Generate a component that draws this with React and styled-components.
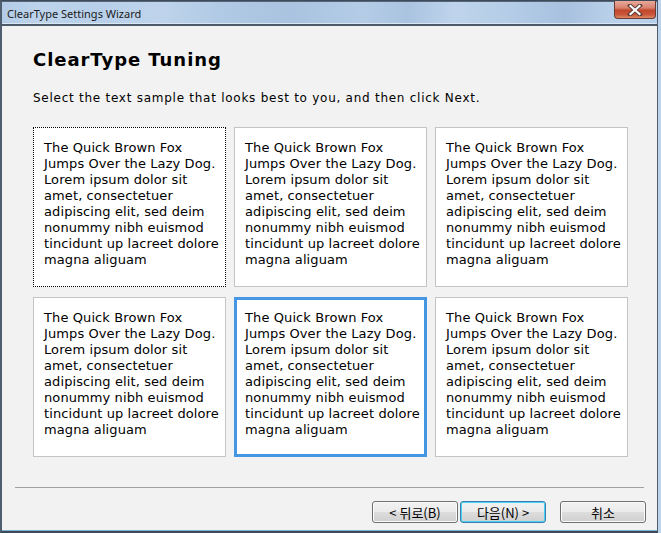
import React from "react";
import styled, { createGlobalStyle } from "styled-components";

const Global = createGlobalStyle`
  html, body { margin: 0; padding: 0; background: #bcd3ea; }
  * { box-sizing: border-box; }
`;

const Window = styled.div`
  width: 658px;
  height: 533px;
  display: flex;
  flex-direction: column;
  border-top: 1px solid #3d4a58;
  border-left: 2px solid #4f5e6e;
  border-right: 1px solid #4f5e6e;
  border-bottom: 2px solid #3e4b58;
  background: #f2f2f2;
`;

const TitleBar = styled.div`
  height: 25px;
  flex: none;
  display: flex;
  align-items: flex-start;
  padding-left: 5px;
  border-top: 1px solid #56657a;
  border-bottom: 2px solid #4b5968;
  box-shadow: inset 0 -1px 0 #d9e6f3;
  background: linear-gradient(90deg, #b3cbe6 0%, #bed4ec 6%, #b7cfe9 14%, #bfd4ec 24%, #b0c9e4 34%, #a9c3e0 44%, #b4cce6 55%, #aac3e0 62%, #bfd4ec 69%, #b5cde7 77%, #a8c1df 86%, #bcd2eb 94%, #b8cfe9 100%);
`;

const Title = styled.div`
  font-family: "Noto Sans", sans-serif;
  font-size: 11px;
  line-height: 24px;
  color: #1b1b1b;
  margin-top: 0px;
`;

const CloseButton = styled.div`
  margin-left: auto;
  margin-right: 1px;
  margin-top: -1px;
  width: 42px;
  height: 18px;
  border: 1px solid #6b3a32;
  border-top: none;
  border-radius: 0 0 4px 4px;
  background: linear-gradient(180deg, #e9a99a 0%, #d9826e 40%, #c2472d 55%, #c9563a 80%, #dc8a66 100%);
  display: flex;
  align-items: center;
  justify-content: center;
`;

const Body = styled.div`
  flex: 1;
  display: flex;
  flex-direction: column;
  border-bottom: 1px solid #7ab0d4;
`;

const Main = styled.div`
  padding: 23px 0 0 31px;
  display: flex;
  flex-direction: column;
`;

const Heading = styled.h1`
  margin: 0;
  font-family: "DejaVu Sans", Verdana, sans-serif;
  font-weight: bold;
  font-size: 18px;
  line-height: 22px;
  letter-spacing: 0.95px;
  color: #000;
`;

const Subtitle = styled.p`
  margin: 19px 0 0 0;
  font-family: "DejaVu Sans", Verdana, sans-serif;
  font-size: 12px;
  line-height: 16px;
  letter-spacing: 0.74px;
  color: #000;
`;

const Grid = styled.div`
  margin-top: 21px;
  display: grid;
  grid-template-columns: repeat(3, 193px);
  grid-auto-rows: 160px;
  column-gap: 8px;
  row-gap: 10px;
`;

const Sample = styled.div`
  background: #fff;
  border: ${(p) =>
    p.$selected ? "3px solid #4597e3" : p.$focused ? "1px dotted #000" : "1px solid #c4c4c4"};
  padding: ${(p) => (p.$selected ? "10px 0 0 8px" : "12px 0 0 10px")};
  font-family: "DejaVu Sans", Verdana, sans-serif;
  font-size: 13px;
  line-height: 16px;
  letter-spacing: 0.1px;
  color: #000;
  white-space: pre;
  overflow: hidden;
`;

const Footer = styled.div`
  margin-top: auto;
  padding: 0 13px 7px 13px;
  display: flex;
  flex-direction: column;
`;

const Separator = styled.div`
  height: 1px;
  background: #a0a0a0;
  margin-bottom: 13px;
`;

const ButtonRow = styled.div`
  display: flex;
  justify-content: flex-end;
  margin-right: -2px;
`;

const Button = styled.div`
  width: 86px;
  height: 22px;
  margin-left: ${(p) => p.$gap || 0}px;
  border: 1px solid ${(p) => (p.$default ? "#3c7fb1" : "#707070")};
  border-radius: 3px;
  background: linear-gradient(180deg, #f2f2f2 0%, #ebebeb 48%, #dddddd 52%, #cfcfcf 100%);
  box-shadow: inset 0 0 0 1px ${(p) => (p.$default ? "#48d2f5" : "#fbfbfb")};
  display: flex;
  align-items: center;
  justify-content: center;
  font-family: "Noto Sans CJK KR", "Noto Sans", sans-serif;
  font-size: 13px;
  color: #000;
`;

const text = `The Quick Brown Fox
Jumps Over the Lazy Dog.
Lorem ipsum dolor sit
amet, consectetuer
adipiscing elit, sed deim
nonummy nibh euismod
tincidunt up lacreet dolore
magna aliguam`;

export default function App() {
  return (
    <>
      <Global />
      <Window>
        <TitleBar>
          <Title>ClearType Settings Wizard</Title>
          <CloseButton>
            <svg width="16" height="12" viewBox="0 0 16 12">
              <path d="M3 1.5 L13 10.5 M13 1.5 L3 10.5" stroke="#5a3a34" strokeWidth="4" strokeLinecap="square" />
              <path d="M3.5 2 L12.5 10 M12.5 2 L3.5 10" stroke="#fff" strokeWidth="2.2" strokeLinecap="square" />
            </svg>
          </CloseButton>
        </TitleBar>
        <Body>
          <Main>
            <Heading>ClearType Tuning</Heading>
            <Subtitle>Select the text sample that looks best to you, and then click Next.</Subtitle>
            <Grid>
              {[0, 1, 2, 3, 4, 5].map((i) => (
                <Sample key={i} $focused={i === 0} $selected={i === 4}>
                  {text}
                </Sample>
              ))}
            </Grid>
          </Main>
          <Footer>
            <Separator />
            <ButtonRow>
              <Button>&lt; 뒤로(B)</Button>
              <Button $default $gap={2}>다음(N) &gt;</Button>
              <Button $gap={14}>취소</Button>
            </ButtonRow>
          </Footer>
        </Body>
      </Window>
    </>
  );
}
